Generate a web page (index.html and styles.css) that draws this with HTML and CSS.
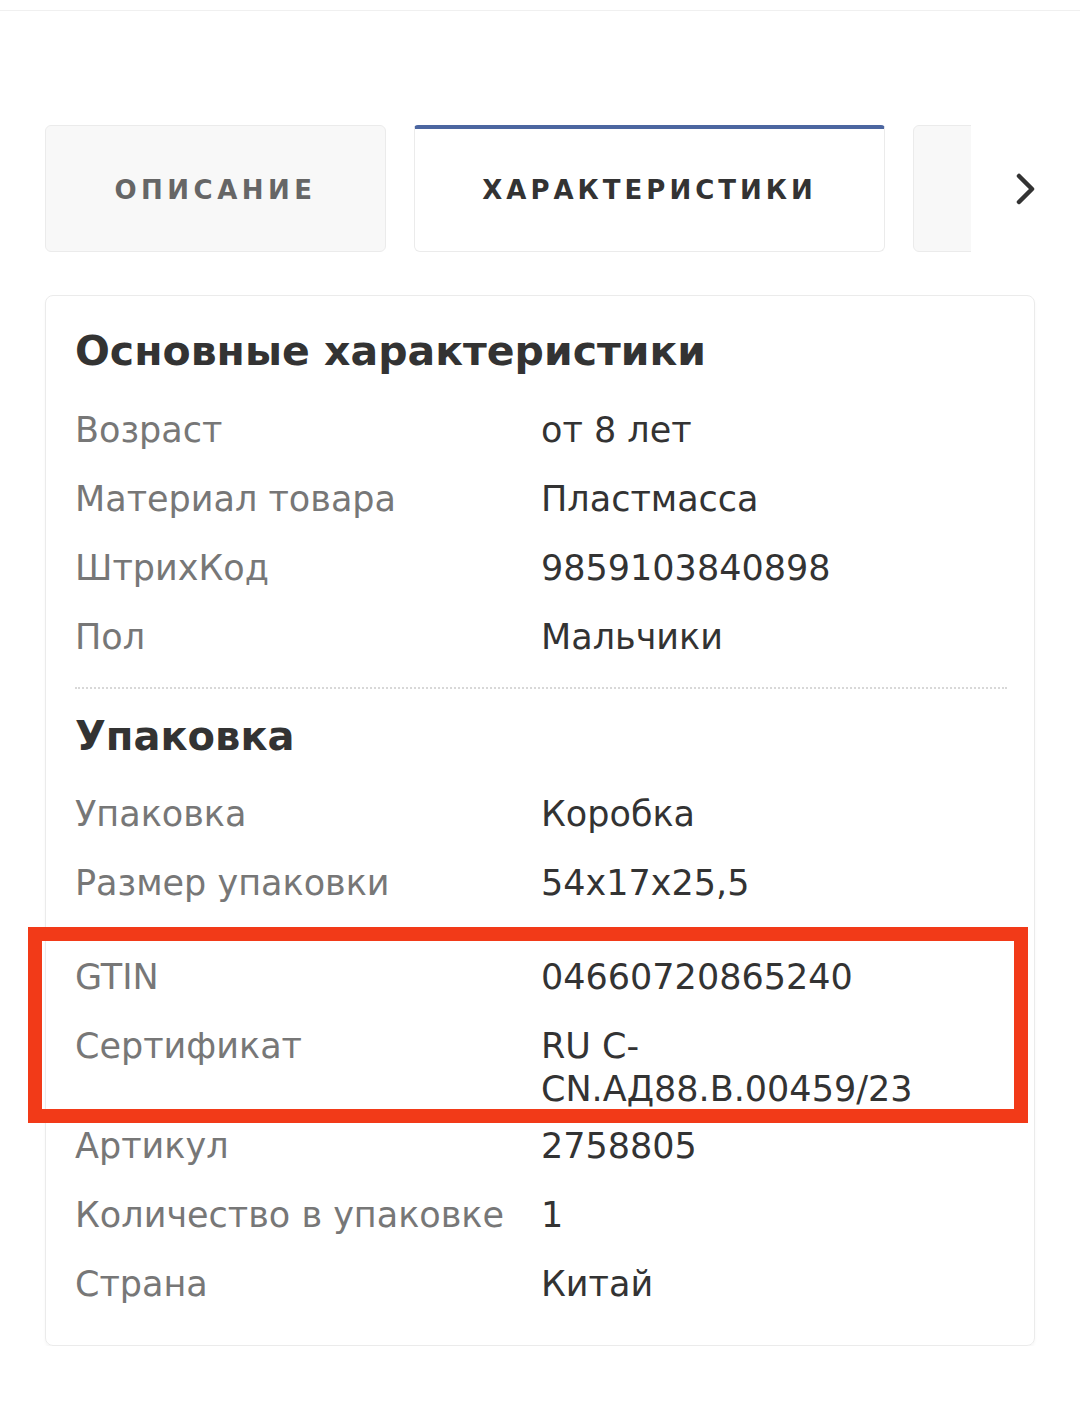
FILE: index.html
```html
<!DOCTYPE html>
<html lang="ru">
<head>
<meta charset="utf-8">
<title>Характеристики</title>
<link rel="stylesheet" href="styles.css">
</head>
<body>
<div class="topbar"></div>
<div class="tabbar">
  <div class="tabs">
    <div class="tab">ОПИСАНИЕ</div>
    <div class="tab tab-active">ХАРАКТЕРИСТИКИ</div>
    <div class="tab tab-stub"></div>
  </div>
  <div class="next">
    <svg width="24" height="34" viewBox="0 0 24 34"><polyline points="5,4 18,17 5,30" fill="none" stroke="#333" stroke-width="4.5" stroke-linecap="round" stroke-linejoin="round"/></svg>
  </div>
</div>
<div class="card">
  <h2 class="section-title">Основные характеристики</h2>
  <div class="row"><div class="label">Возраст</div><div class="value">от 8 лет</div></div>
  <div class="row"><div class="label">Материал товара</div><div class="value">Пластмасса</div></div>
  <div class="row"><div class="label">ШтрихКод</div><div class="value">9859103840898</div></div>
  <div class="row"><div class="label">Пол</div><div class="value">Мальчики</div></div>
  <div class="divider"></div>
  <h2 class="section-title section-title-second">Упаковка</h2>
  <div class="row"><div class="label">Упаковка</div><div class="value">Коробка</div></div>
  <div class="row"><div class="label">Размер упаковки</div><div class="value">54x17x25,5</div></div>
  <div class="mark">
    <div class="row"><div class="label">GTIN</div><div class="value">04660720865240</div></div>
    <div class="row row-last"><div class="label">Сертификат</div><div class="value">RU C-CN.АД88.В.00459/23</div></div>
  </div>
  <div class="row row-after"><div class="label">Артикул</div><div class="value">2758805</div></div>
  <div class="row"><div class="label">Количество в упаковке</div><div class="value">1</div></div>
  <div class="row"><div class="label">Страна</div><div class="value">Китай</div></div>
</div>
</body>
</html>
```

FILE: styles.css
```css
html, body {
  margin: 0;
  padding: 0;
  background: #fff;
}
body {
  font-family: "DejaVu Sans", "Noto Sans", sans-serif;
  color: #333;
  width: 1080px;
}
.topbar {
  height: 10px;
  border-bottom: 1px solid #f0f0f0;
}
.tabbar {
  display: flex;
  align-items: center;
  margin-top: 114px;
  padding-left: 45px;
}
.tabs {
  display: flex;
  gap: 28px;
  width: 926px;
  overflow: hidden;
  flex: none;
}
.tab {
  flex: none;
  box-sizing: border-box;
  height: 127px;
  width: 341px;
  display: flex;
  align-items: center;
  justify-content: center;
  background: #f8f8f8;
  border: 1px solid #ebebeb;
  border-radius: 6px;
  font-size: 26px;
  font-weight: bold;
  letter-spacing: 4.5px;
  color: #666;
  padding-top: 3px;
}
.tab-active {
  width: 471px;
  background: #fff;
  color: #333;
  border-top: 4px solid #4c66a0;
  border-radius: 4px 4px 6px 6px;
  padding-top: 0;
  letter-spacing: 4px;
}
.tab-stub {
  width: 120px;
}
.next {
  margin-left: 43px;
  display: flex;
  align-items: center;
}
.next svg {
  display: block;
}
.card {
  box-sizing: border-box;
  margin: 43px 0 0 45px;
  width: 990px;
  height: 1051px;
  border: 1px solid #ebebeb;
  border-radius: 8px;
  box-shadow: 0 2px 3px rgba(0,0,0,0.04);
  padding: 29px 27px 0 29px;
}
.section-title {
  margin: 0 0 17px 0;
  font-size: 41px;
  line-height: 52px;
  font-weight: bold;
  color: #333;
}
.section-title-second {
  font-size: 40px;
  margin-bottom: 16px;
}
.row {
  display: grid;
  grid-template-columns: 466px 420px;
  padding: 15px 0 11px 0;
  font-size: 35px;
  line-height: 43px;
}
.label {
  color: #777;
}
.value {
  color: #333;
}
.divider {
  margin: 17px 0 21px 0;
  border-top: 2px dotted #d8d8d8;
}
.mark {
  margin: 11px -21px 0 -47px;
  border: 14px solid #f23a18;
  padding: 0 0 0 33px;
}
.row-last {
  padding-bottom: 0;
  margin-bottom: -2px;
}
.row-after {
  padding-top: 2px;
}
```
